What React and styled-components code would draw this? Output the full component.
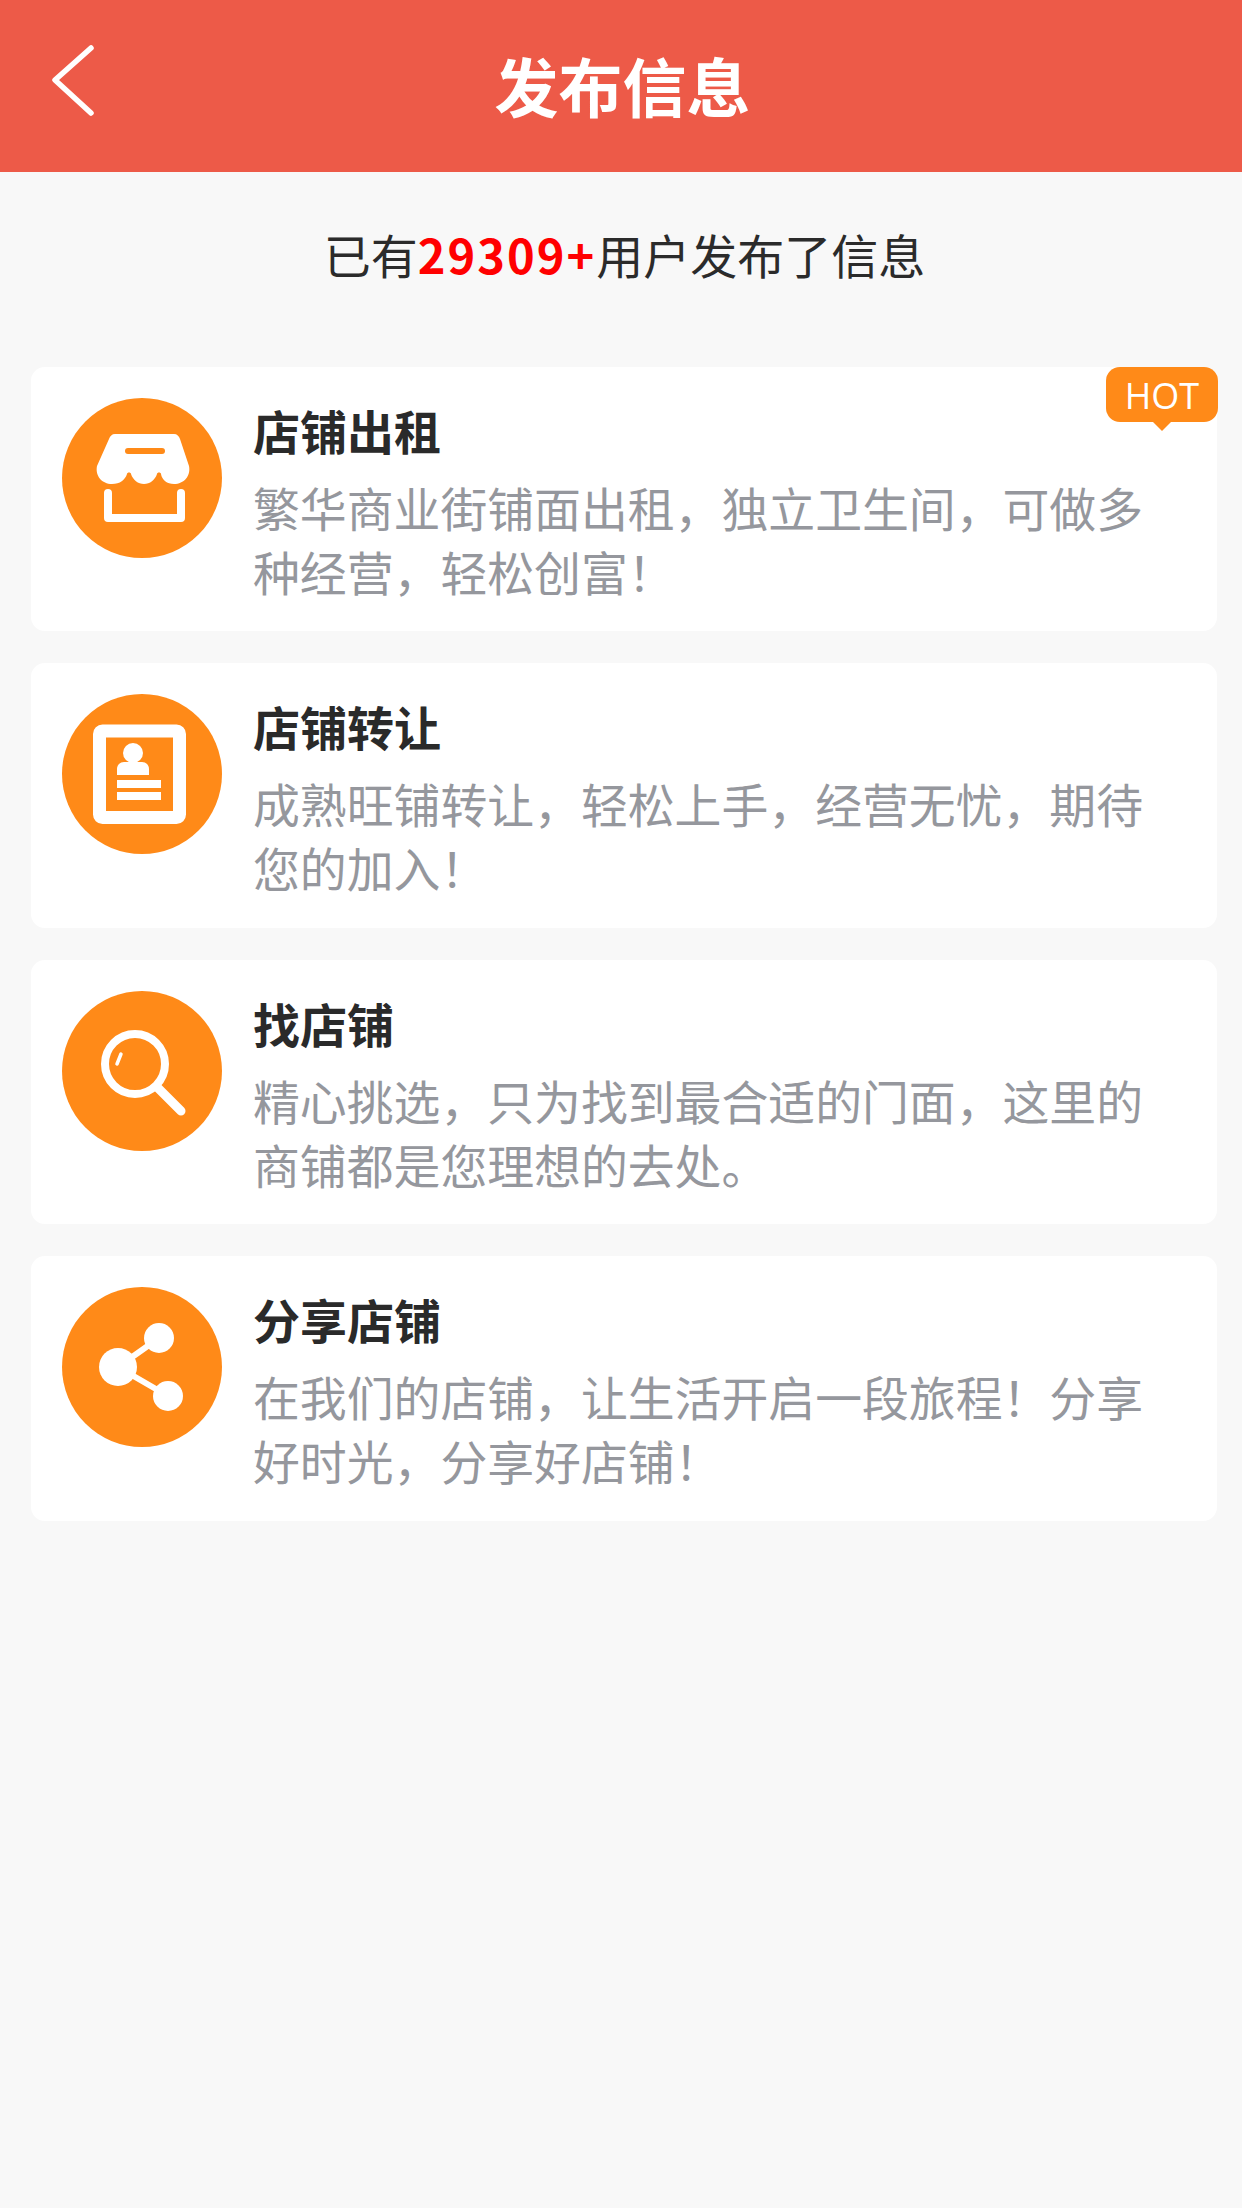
import React from "react";
import styled, { createGlobalStyle } from "styled-components";

const GlobalStyle = createGlobalStyle`
  html, body {
    margin: 0;
    padding: 0;
    background: #f8f8f8;
  }
`;

const items = [
  {
    title: "店铺出租",
    desc: "繁华商业街铺面出租，独立卫生间，可做多种经营，轻松创富！",
    icon: "store",
    hot: true
  },
  {
    title: "店铺转让",
    desc: "成熟旺铺转让，轻松上手，经营无忧，期待您的加入！",
    icon: "profile"
  },
  {
    title: "找店铺",
    desc: "精心挑选，只为找到最合适的门面，这里的商铺都是您理想的去处。",
    icon: "search"
  },
  {
    title: "分享店铺",
    desc: "在我们的店铺，让生活开启一段旅程！分享好时光，分享好店铺！",
    icon: "share"
  }
];

const StoreIcon = () => (
  <svg width="160" height="160" viewBox="0 0 160 160">
    <path
      fill="#fff"
      d="M53 36H112C115 36 117 38 118 41L127 68C129 78 122 86 112 86C105 86 100 82 99 76C99 74 95 74 95 76C93 82 88 86 82 86C76 86 71 82 69 76C69 74 65 74 65 76C63 82 58 86 50 86C40 86 33 78 35 68L47 41C48 38 50 36 53 36Z"
    />
    <path stroke="#ff8a18" strokeWidth="6" strokeLinecap="round" d="M66 53H100" />
    <path
      fill="none"
      stroke="#fff"
      strokeWidth="8"
      strokeLinecap="round"
      strokeLinejoin="round"
      d="M46 95V120H119V95"
    />
  </svg>
);

const ProfileIcon = () => (
  <svg width="160" height="160" viewBox="0 0 160 160">
    <rect x="37.5" y="37" width="80" height="86.500" rx="3" fill="none" stroke="#fff" strokeWidth="13" />
    <circle cx="71" cy="59" r="10" fill="#fff" />
    <path fill="#fff" d="M55 81V75C55 71 58 68 62 68H80C84 68 87 71 87 75V81Z" />
    <rect x="55" y="86" width="44" height="8" fill="#fff" />
    <rect x="55" y="98" width="44" height="8" fill="#fff" />
  </svg>
);

const SearchIcon = () => (
  <svg width="160" height="160" viewBox="0 0 160 160" fill="none" stroke="#fff" strokeLinecap="round">
    <circle cx="73" cy="73" r="30" strokeWidth="8" />
    <path strokeWidth="9" d="M96 97L119 120" />
    <path strokeWidth="3.500" d="M59 63L55 73" />
  </svg>
);

const ShareIcon = () => (
  <svg width="160" height="160" viewBox="0 0 160 160">
    <path stroke="#fff" strokeWidth="6" fill="none" d="M97 51L56 80L106 109" />
    <circle cx="56" cy="80" r="19" fill="#fff" />
    <circle cx="97" cy="51" r="15" fill="#fff" />
    <circle cx="106" cy="109" r="15" fill="#fff" />
  </svg>
);

const icons = {
  store: StoreIcon,
  profile: ProfileIcon,
  search: SearchIcon,
  share: ShareIcon
};

const App = () => {
  return (
    <Page>
      <GlobalStyle />
      <Header>
        <BackButton>
          <svg width="48" height="76" viewBox="0 0 48 76" fill="none">
            <path
              d="M41 6L5 38L41 71"
              stroke="#fff"
              strokeWidth="5.500"
              strokeLinecap="round"
              strokeLinejoin="round"
            />
          </svg>
        </BackButton>
        <Title>发布信息</Title>
      </Header>
      <Summary>
        已有<Count>29309+</Count>用户发布了信息
      </Summary>
      <List>
        {items.map(item => {
          const Icon = icons[item.icon];
          return (
            <Card key={item.title}>
              <IconCircle>
                <Icon />
              </IconCircle>
              <CardText>
                <CardTitle>{item.title}</CardTitle>
                <CardDesc>{item.desc}</CardDesc>
              </CardText>
              {item.hot && <HotBadge>HOT</HotBadge>}
            </Card>
          );
        })}
      </List>
    </Page>
  );
};

export default App;

const Page = styled.div`
  min-height: 2208px;
  background: #f8f8f8;
  font-family: "Noto Sans CJK SC", "Noto Sans", sans-serif;
`;

const Header = styled.header`
  position: relative;
  display: flex;
  align-items: center;
  justify-content: center;
  box-sizing: border-box;
  height: 172px;
  padding: 0 0 5px 3px;
  background: #ed5a48;
`;

const BackButton = styled.div`
  position: absolute;
  left: 50px;
  top: 42px;
  display: flex;
`;

const Title = styled.h1`
  margin: 0;
  color: #fff;
  font-size: 64px;
  font-weight: 700;
  line-height: 1;
`;

const Summary = styled.div`
  padding: 48px 0 0 7px;
  height: 145px;
  box-sizing: border-box;
  text-align: center;
  color: #2b2b2b;
  font-size: 47px;
  line-height: 68px;
`;

const Count = styled.span`
  color: #ff0000;
  font-weight: 700;
  letter-spacing: 2px;
`;

const List = styled.div`
  display: flex;
  flex-direction: column;
  gap: 32px;
  padding: 50px 25px 0 31px;
`;

const Card = styled.section`
  position: relative;
  display: flex;
  gap: 31px;
  height: 264.4px;
  box-sizing: border-box;
  padding: 31px;
  background: #fff;
  border-radius: 14px;
`;

const IconCircle = styled.div`
  flex: none;
  width: 160px;
  height: 160px;
  border-radius: 50%;
  background: #ff8a18;
`;

const CardText = styled.div`
  flex: 1;
  min-width: 0;
`;

const CardTitle = styled.h2`
  margin: 0;
  color: #2a2a2a;
  font-size: 47px;
  font-weight: 700;
  line-height: 63px;
`;

const CardDesc = styled.p`
  margin: 14px 0 0;
  color: #95979d;
  font-size: 46.85px;
  line-height: 64px;
`;

const HotBadge = styled.div`
  position: absolute;
  top: 0;
  right: -1px;
  display: flex;
  align-items: center;
  justify-content: center;
  box-sizing: border-box;
  width: 112px;
  height: 55px;
  padding-top: 2px;
  border-radius: 14px;
  background: #ff8a18;
  color: #fff;
  font-family: "Open Sans", sans-serif;
  font-size: 36px;

  &::after {
    content: "";
    position: absolute;
    left: 47px;
    bottom: -9px;
    border-left: 9px solid transparent;
    border-right: 9px solid transparent;
    border-top: 9px solid #ff8a18;
  }
`;
